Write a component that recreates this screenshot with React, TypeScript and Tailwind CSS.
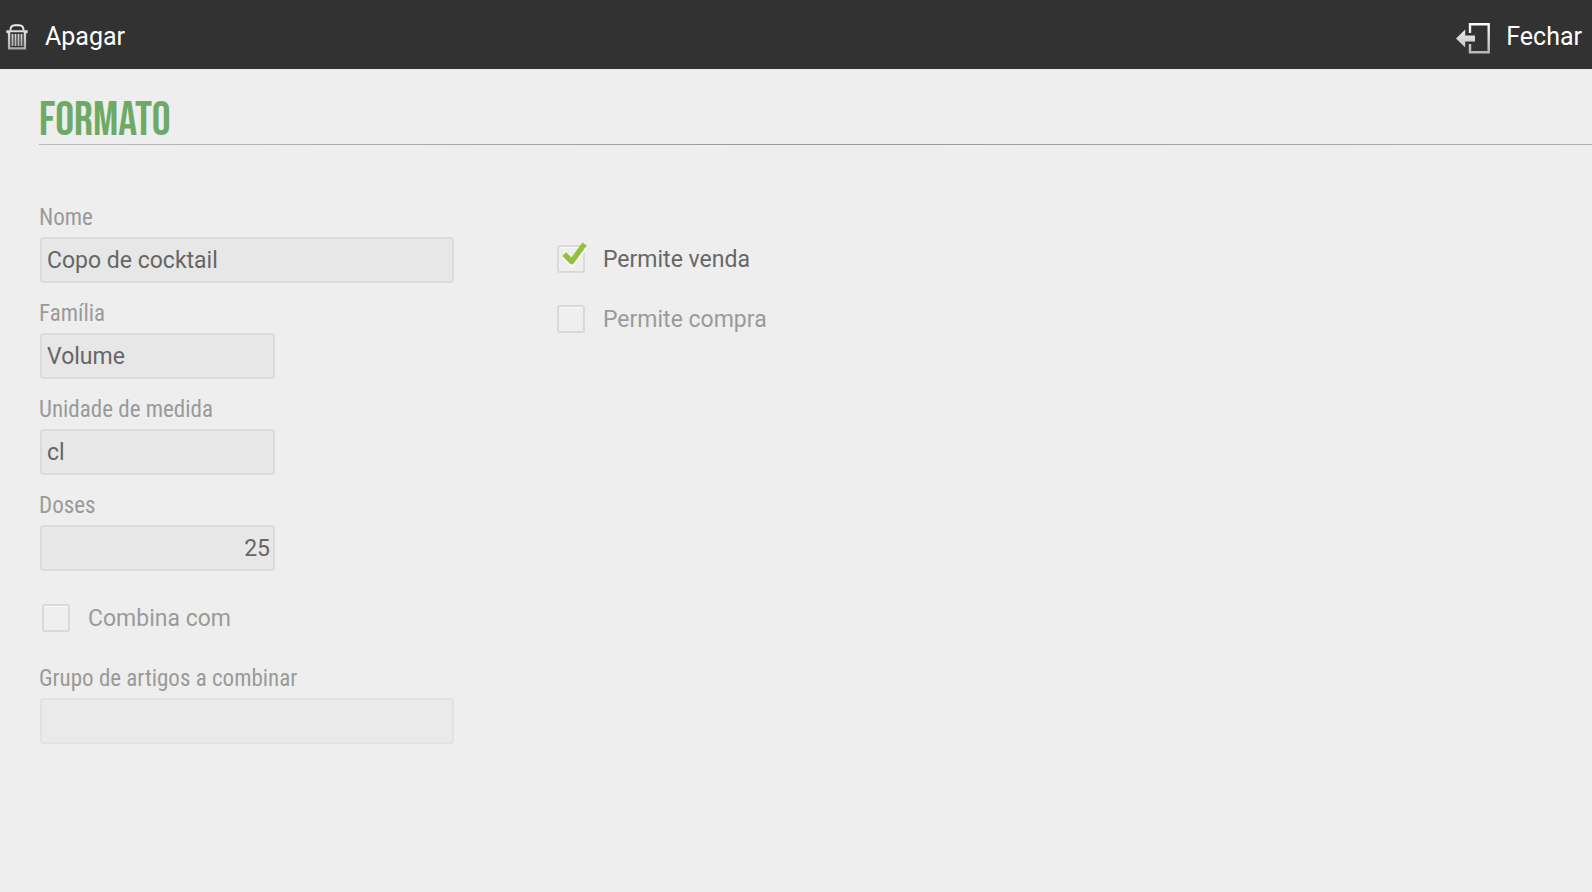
import { useId, useState } from "react";
import type { ReactNode } from "react";
import clsx from "clsx";

// ---------------------------------------------------------------------------
// Icons
// ---------------------------------------------------------------------------

function TrashIcon() {
  return (
    <svg width="22" height="26" viewBox="0 0 22 26" fill="none" aria-hidden="true">
      <defs>
        <linearGradient id="trash-fill" x1="0" y1="0" x2="0" y2="26" gradientUnits="userSpaceOnUse">
          <stop offset="0" stopColor="#f2f2f2" />
          <stop offset="1" stopColor="#a8a8a8" />
        </linearGradient>
      </defs>
      <g stroke="url(#trash-fill)">
        <path d="M4.4 6.5C4.4 2.6 6.4 1.2 9 1.2h4c2.6 0 4.6 1.4 4.6 5.3" strokeWidth="1.9" />
        <path d="M1.3 8.3V7.200h19.400v1.100" strokeWidth="2" strokeLinecap="round" />
        <path d="M3.100 7.500v16.900h15.800V7.500" strokeWidth="2.400" />
        <path d="M6.500 10v12M9.500 10v12M12.500 10v12M15.500 10v12" strokeWidth="1.800" />
      </g>
    </svg>
  );
}

function ExitIcon() {
  return (
    <svg width="34" height="34" viewBox="0 0 34 34" fill="none" aria-hidden="true">
      <defs>
        <linearGradient id="exit-fill" x1="0" y1="2" x2="0" y2="34" gradientUnits="userSpaceOnUse">
          <stop offset="0" stopColor="#ffffff" />
          <stop offset="1" stopColor="#b4b4b4" />
        </linearGradient>
      </defs>
      <path d="M14 13V4.200h18.700v28H14V24" stroke="url(#exit-fill)" strokeWidth="2.400" />
      <path d="M0 18.500 9.200 9.500v6h9.800v6H9.200v6z" fill="url(#exit-fill)" />
    </svg>
  );
}

// ---------------------------------------------------------------------------
// Form parts
// ---------------------------------------------------------------------------

interface FieldProps {
  label: string;
  defaultValue?: string;
  wide?: boolean;
  numeric?: boolean;
  disabled?: boolean;
}

function Field({ label, defaultValue = "", wide = false, numeric = false, disabled = false }: FieldProps) {
  const id = useId();

  return (
    <div className="flex flex-col gap-1">
      <label
        htmlFor={id}
        className="font-['Roboto_Condensed','Roboto',sans-serif] text-[23px] leading-[30px] text-[#9a9a9a]"
      >
        {label}
      </label>
      <input
        id={id}
        type="text"
        inputMode={numeric ? "decimal" : undefined}
        defaultValue={defaultValue}
        disabled={disabled}
        className={clsx(
          "ml-px h-[46px] max-w-full rounded border-2 px-[5px] text-[23px] outline-none",
          wide ? "w-[414px]" : "w-[235px]",
          numeric && "pr-[3px] text-right",
          disabled ? "border-[#e2e2e2] bg-[#eaeaea]" : "border-[#dbdbdb] bg-[#e7e7e7] text-[#666666]",
        )}
      />
    </div>
  );
}

interface CheckProps {
  children: ReactNode;
  defaultChecked?: boolean;
}

function Check({ children, defaultChecked = false }: CheckProps) {
  const [checked, setChecked] = useState(defaultChecked);

  return (
    <label
      className={clsx(
        "flex items-center gap-[18px] text-[23px] leading-7",
        checked ? "text-[#666666]" : "text-[#9a9a9a]",
      )}
    >
      <span className="relative flex">
        <input
          type="checkbox"
          checked={checked}
          onChange={(e) => setChecked(e.target.checked)}
          className="size-7 appearance-none rounded-[3px] border-2 border-[#d9d9d9] bg-[#efefef] shadow-[inset_0_1px_0_#fafafa]"
        />
        {checked && (
          <svg
            className="pointer-events-none absolute -top-1 left-1"
            width="28"
            height="28"
            viewBox="0 0 28 28"
            fill="none"
            aria-hidden="true"
          >
            <path d="M2.500 15 10.700 24 24.500 7" stroke="#fafafa" strokeWidth="4" />
            <path d="M3.200 13.200 10.700 20.600 23.600 3" stroke="#93c13d" strokeWidth="5.400" strokeLinejoin="round" />
          </svg>
        )}
      </span>
      <span className="pt-0.5">{children}</span>
    </label>
  );
}

// ---------------------------------------------------------------------------
// Page
// ---------------------------------------------------------------------------

export default function App() {
  return (
    <div className="min-h-screen bg-[#eeeeee] font-['Roboto',sans-serif]">
      <header className="flex h-[69px] items-center justify-between bg-[#323232] pr-2.5 pl-1.5 text-[25px] text-white">
        <button type="button" className="flex items-center gap-[17px] pt-1">
          <TrashIcon />
          Apagar
        </button>
        <button type="button" className="flex items-center gap-4 pt-1">
          <ExitIcon />
          Fechar
        </button>
      </header>

      <main className="pl-[39px]">
        <h1 className="pt-[30px] font-['Bebas_Neue',sans-serif] text-[47px] leading-[45px] text-[#6eaa66]">
          Formato
        </h1>
        <hr className="h-px border-0 bg-linear-to-r from-[#bbbbbb] via-[#999999] to-[#b0b0b0]" />

        <form className="flex flex-wrap gap-x-[103px] pt-[58px]">
          <div className="flex flex-col gap-4">
            <Field label="Nome" defaultValue="Copo de cocktail" wide />
            <Field label="Família" defaultValue="Volume" />
            <Field label="Unidade de medida" defaultValue="cl" />
            <Field label="Doses" defaultValue="25" numeric />
            <div className="pt-4 pb-[15px] pl-[3px]">
              <Check>Combina com</Check>
            </div>
            <Field label="Grupo de artigos a combinar" wide disabled />
          </div>
          <div className="flex flex-col gap-[30px] pt-[41px]">
            <Check defaultChecked>Permite venda</Check>
            <Check>Permite compra</Check>
          </div>
        </form>
      </main>
    </div>
  );
}
